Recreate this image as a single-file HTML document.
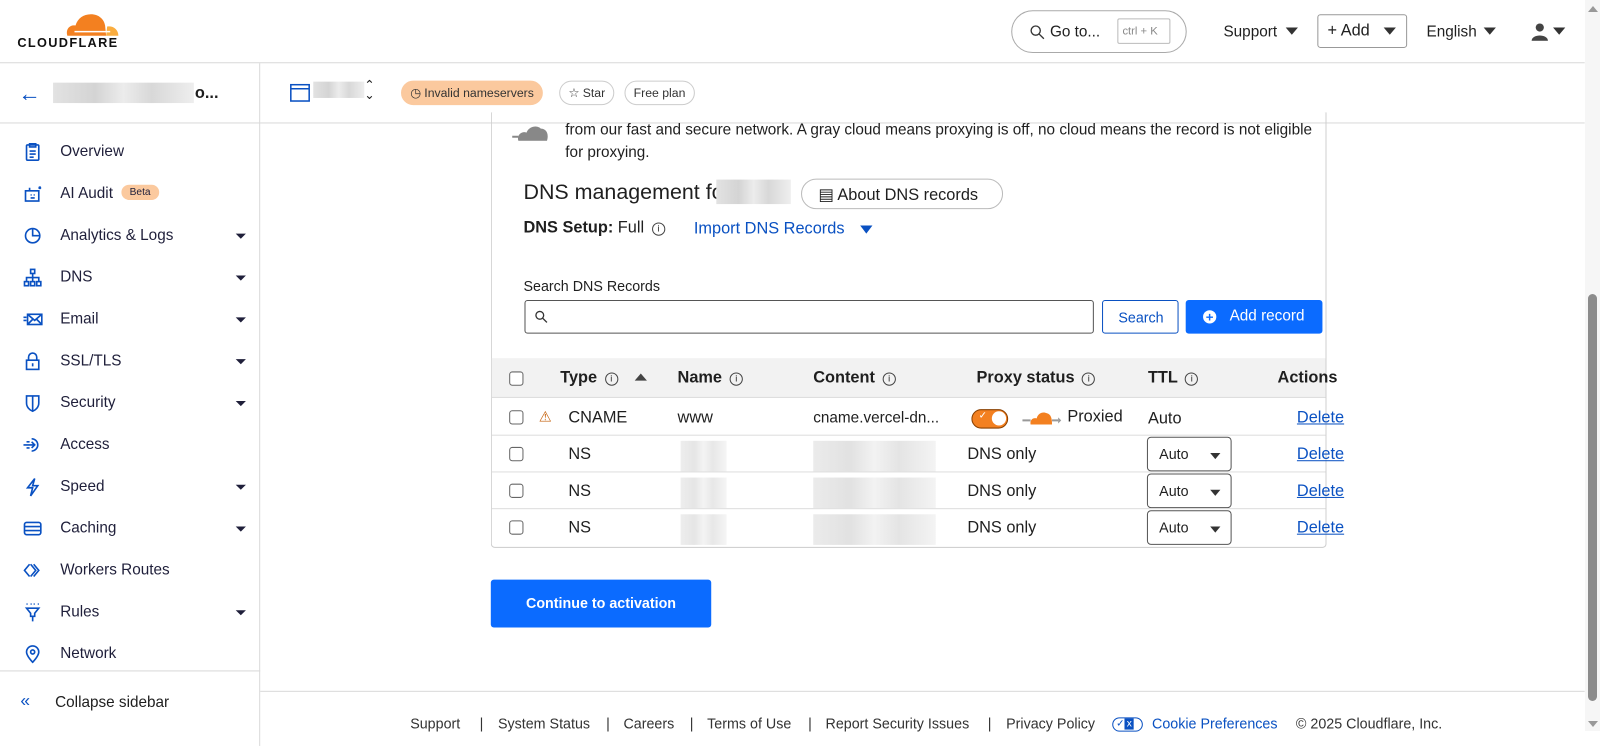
<!DOCTYPE html>
<html><head><meta charset="utf-8"><style>
*{box-sizing:border-box;margin:0;padding:0}
body{width:1600px;height:731px;overflow:hidden;font-family:"Liberation Sans",sans-serif;color:#1f1f1f;background:#fff;position:relative;font-size:15px}
.w{position:absolute;left:0;top:0;width:1568px;height:717px;transform:scale(1.0204);transform-origin:0 0}
.abs{position:absolute}
.hdr{left:0;top:0;width:1553px;height:62px;border-bottom:1px solid #d9d9d9}
.side{left:0;top:62px;width:255px;height:669px;border-right:1px solid #d9d9d9}
.sub{left:255px;top:62px;width:1298px;height:59px;border-bottom:1px solid #d9d9d9}
.nav{position:absolute;left:0;width:255px;height:41px;display:flex;align-items:center;font-size:15px;color:#1f1f3a}
.nav svg{position:absolute;left:22px;width:20px;height:20px;fill:none;stroke:#0a51c2;stroke-width:1.6}
.nav span{position:absolute;left:59px;top:12px}
.nav i{position:absolute;left:231px;top:19px;border:5px solid transparent;border-top:5px solid #1f1f3a;border-bottom:0}
.pill{position:absolute;top:79px;height:24px;border:1px solid #ccc;border-radius:12px;font-size:12px;display:flex;align-items:center;padding:0 8px;color:#333}
.blur{position:absolute;background:linear-gradient(90deg,#e2e2e2,#d4d4d4 30%,#ececec 50%,#d8d8d8 70%,#eee)}
.card{left:481px;top:110px;width:819px;height:427px;border:1px solid #cfcfcf;border-top:0;border-radius:0 0 4px 4px}
.th{font-weight:bold;font-size:16px;position:absolute;top:362px}
.row{position:absolute;left:482px;width:817px;height:36px;border-top:1px solid #ddd}
.cb{position:absolute;left:499px;width:14px;height:14px;border:1.5px solid #666;border-radius:3px}
.t{position:absolute;font-size:16px}
.del{position:absolute;left:1271px;color:#0a51c2;text-decoration:underline;font-size:16px}
.sel{position:absolute;left:1124px;width:83px;height:34px;border:1px solid #555;border-radius:4px;font-size:14px;padding:8px 0 0 11px}
.sel:after{content:"";position:absolute;right:10px;top:15px;border:5px solid transparent;border-top:6px solid #333;border-bottom:0}
.info{display:inline-block;width:13px;height:13px;border:1px solid #444;border-radius:50%;font-size:9px;text-align:center;line-height:11px;font-weight:normal;vertical-align:1px;margin-left:3px}
.foot span{position:absolute;top:701px;font-size:14px;color:#333;white-space:nowrap}
</style></head><body>
<div class="w">
<div class="abs hdr"></div>
<svg class="abs" style="left:60px;top:10px" width="62" height="26" viewBox="0 0 62 26"><path d="M6 25 C4 18 9 14 14 15 C16 8 22 4 29 4 C37 4 42 9 43 15 L44 25Z" fill="#f38020"/><path d="M44 25 L45 16 C51 15 56 19 56 25Z" fill="#faad3f"/><path d="M13 21 H48" stroke="#fff" stroke-width="1.5"/></svg>
<div class="abs" style="left:17px;top:35px;font-weight:bold;font-size:12.5px;letter-spacing:1.3px;color:#111">CLOUDFLARE</div>
<div class="abs" style="left:991px;top:10px;width:172px;height:42px;border:1px solid #aaa;border-radius:21px"></div>
<svg class="abs" style="left:1009px;top:24px" width="15" height="15" viewBox="0 0 15 15"><circle cx="6" cy="6" r="4.5" fill="none" stroke="#333" stroke-width="1.3"/><path d="M9.5 9.5L14 14" stroke="#333" stroke-width="1.3"/></svg>
<div class="abs" style="left:1029px;top:23px;font-size:15px">Go to...</div>
<div class="abs" style="left:1095px;top:18px;width:52px;height:25px;border:1px solid #bbb;border-radius:2px;font-size:11px;color:#888;padding:6px 0 0 4px">ctrl + K</div>
<div class="abs" style="left:1199px;top:23px;font-size:15px">Support</div>
<div class="abs" style="left:1260px;top:27px;border:6px solid transparent;border-top:7px solid #333;border-bottom:0"></div>
<div class="abs" style="left:1291px;top:14px;width:88px;height:33px;border:1px solid #999;border-radius:3px;font-size:16px;padding:7px 0 0 9px">+ Add</div>
<div class="abs" style="left:1356px;top:27px;border:6px solid transparent;border-top:7px solid #333;border-bottom:0"></div>
<div class="abs" style="left:1398px;top:23px;font-size:15px">English</div>
<div class="abs" style="left:1454px;top:27px;border:6px solid transparent;border-top:7px solid #333;border-bottom:0"></div>
<svg class="abs" style="left:1500px;top:22px" width="18" height="18" viewBox="0 0 18 18"><circle cx="9" cy="5" r="4" fill="#444"/><path d="M1 18 C1 11 17 11 17 18Z" fill="#444"/></svg>
<div class="abs" style="left:1522px;top:27px;border:6px solid transparent;border-top:7px solid #333;border-bottom:0"></div>

<div class="abs side"></div>
<div class="abs" style="left:0;top:120px;width:255px;border-top:1px solid #d9d9d9"></div>
<div class="abs" style="left:18px;top:79px;font-size:22px;color:#0a51c2">&#8592;</div>
<div class="blur" style="left:52px;top:81px;width:138px;height:20px"></div>
<div class="abs" style="left:191px;top:83px;font-weight:bold;font-size:16px">o...</div>

<div class="nav" style="top:128px"><svg viewBox="0 0 20 20"><rect x="4" y="3" width="12" height="15" rx="1"/><path d="M7 2h6v3H7zM7 9h6M7 12h6M7 15h4"/></svg><span>Overview</span></div>
<div class="nav" style="top:169px"><svg viewBox="0 0 20 20"><rect x="3" y="7" width="13" height="10"/><path d="M7 7V4M8 11h1M11 11h1M8 14h4M16 3l2 2M18 3l-2 2"/></svg><span>AI Audit</span><b style="position:absolute;left:119px;top:12px;background:#fbc99e;border-radius:9px;font-size:10px;font-weight:normal;padding:2px 8px">Beta</b></div>
<div class="nav" style="top:210px"><svg viewBox="0 0 20 20"><circle cx="10" cy="10" r="7"/><path d="M10 3v7h7"/></svg><span>Analytics &amp; Logs</span><i></i></div>
<div class="nav" style="top:251px"><svg viewBox="0 0 20 20"><rect x="8" y="2" width="4" height="4"/><rect x="2" y="14" width="4" height="4"/><rect x="8" y="14" width="4" height="4"/><rect x="14" y="14" width="4" height="4"/><path d="M10 6v8M4 14v-4h12v4"/></svg><span>DNS</span><i></i></div>
<div class="nav" style="top:292px"><svg viewBox="0 0 20 20"><rect x="5" y="5" width="14" height="10"/><path d="M5 5l7 6 7-6M5 15l5-5M19 15l-5-5M1 8h3M1 11h3"/></svg><span>Email</span><i></i></div>
<div class="nav" style="top:333px"><svg viewBox="0 0 20 20"><rect x="4" y="9" width="12" height="9"/><path d="M6 9V6a4 4 0 0 1 8 0v3M10 12v3"/></svg><span>SSL/TLS</span><i></i></div>
<div class="nav" style="top:374px"><svg viewBox="0 0 20 20"><path d="M4 3h12v7c0 4-3 7-6 8-3-1-6-4-6-8zM10 3v15"/></svg><span>Security</span><i></i></div>
<div class="nav" style="top:415px"><svg viewBox="0 0 20 20"><path d="M9 4a6 6 0 1 1 0 12M1 10h11M9 7l3 3-3 3M4 7h3M4 13h3"/></svg><span>Access</span></div>
<div class="nav" style="top:456px"><svg viewBox="0 0 20 20"><path d="M12 2L5 11h5l-2 8 7-10h-5z"/></svg><span>Speed</span><i></i></div>
<div class="nav" style="top:497px"><svg viewBox="0 0 20 20"><rect x="2" y="4" width="16" height="12" rx="2"/><path d="M2 8h16M2 12h16"/></svg><span>Caching</span><i></i></div>
<div class="nav" style="top:538px"><svg viewBox="0 0 20 20"><path d="M7 4L2 10l5 6M11 4l5 6-5 6M8 4l5 6-5 6"/></svg><span>Workers Routes</span></div>
<div class="nav" style="top:579px"><svg viewBox="0 0 20 20"><path d="M4 6h12l-4 5v3h-4v-3zM10 14v5M4 2h1M8 2h1M11 2h1M15 2h1"/></svg><span>Rules</span><i></i></div>
<div class="nav" style="top:620px"><svg viewBox="0 0 20 20"><path d="M10 18s-6-6-6-10a6 6 0 0 1 12 0c0 4-6 10-6 10z"/><circle cx="10" cy="8" r="2"/></svg><span>Network</span></div>
<div class="abs" style="left:0;top:657px;width:255px;border-top:1px solid #d9d9d9"></div>
<div class="abs" style="left:20px;top:677px;font-size:17px;color:#0a51c2">&#171;</div>
<div class="abs" style="left:54px;top:680px;font-size:15px">Collapse sidebar</div>

<div class="abs sub"></div>
<svg class="abs" style="left:284px;top:82px" width="20" height="18" viewBox="0 0 20 18"><rect x="1" y="1" width="18" height="16" fill="none" stroke="#0a51c2" stroke-width="1.5"/><path d="M1 5h18" stroke="#0a51c2" stroke-width="1.5"/></svg>
<div class="blur" style="left:307px;top:80px;width:50px;height:16px"></div>
<div class="abs" style="left:357px;top:78px;font-size:12px;line-height:10px">&#8963;<br>&#8964;</div>
<div class="pill" style="left:393px;background:#fbc99e;border-color:#fbc99e">&#9719;&nbsp;Invalid nameservers</div>
<div class="pill" style="left:548px">&#9734;&nbsp;Star</div>
<div class="pill" style="left:612px">Free plan</div>

<div class="abs card"></div>
<svg class="abs" style="left:500px;top:120px" width="40" height="18" viewBox="0 0 40 18"><path d="M8 18 C6 12 12 8 16 10 C18 4 26 2 30 6 C36 6 38 12 36 18Z" fill="#888"/><path d="M2 14h6" stroke="#888" stroke-width="2"/></svg>
<div class="abs" style="left:554px;top:117px;font-size:15px;line-height:22px;width:740px">from our fast and secure network. A gray cloud means proxying is off, no cloud means the record is not eligible for proxying.</div>
<div class="abs" style="left:513px;top:177px;font-size:21px">DNS management fo</div>
<div class="blur" style="left:702px;top:176px;width:73px;height:24px"></div>
<div class="abs" style="left:785px;top:175px;width:198px;height:30px;border:1px solid #bbb;border-radius:15px;font-size:16px;padding:5px 0 0 16px">&#9636; About DNS records</div>
<div class="abs" style="left:513px;top:215px;font-size:16px"><b>DNS Setup:</b> Full <span class="info">i</span></div>
<div class="abs" style="left:680px;top:216px;font-size:16px;color:#0a51c2">Import DNS Records</div>
<div class="abs" style="left:843px;top:221px;border:6px solid transparent;border-top:8px solid #0a51c2;border-bottom:0"></div>
<div class="abs" style="left:513px;top:272px;font-size:14px">Search DNS Records</div>
<div class="abs" style="left:514px;top:294px;width:558px;height:33px;border:1px solid #555;border-radius:3px"></div>
<svg class="abs" style="left:524px;top:304px" width="13" height="13" viewBox="0 0 13 13"><circle cx="5" cy="5" r="3.8" fill="none" stroke="#333" stroke-width="1.3"/><path d="M8 8l4 4" stroke="#333" stroke-width="1.3"/></svg>
<div class="abs" style="left:1080px;top:294px;width:75px;height:33px;border:1px solid #0a51c2;border-radius:3px;color:#0a51c2;font-size:14px;padding:8px 0 0 15px">Search</div>
<div class="abs" style="left:1162px;top:294px;width:134px;height:33px;background:#0b6bff;border-radius:3px;color:#fff;font-size:15px;padding:7px 0 0 43px">Add record</div>
<div class="abs" style="left:1179px;top:304px;width:13px;height:13px;background:#fff;border-radius:50%;color:#0b6bff;font-size:13px;line-height:13px;text-align:center;font-weight:bold">+</div>

<div class="abs" style="left:482px;top:351px;width:817px;height:39px;background:#f2f2f2;border-bottom:1px solid #ddd"></div>
<div class="cb" style="top:364px;background:#fff"></div>
<div class="th" style="left:549px">Type <span class="info">i</span></div>
<div class="abs" style="left:622px;top:366px;border:6px solid transparent;border-bottom:7px solid #444;border-top:0"></div>
<div class="th" style="left:664px">Name <span class="info">i</span></div>
<div class="th" style="left:797px">Content <span class="info">i</span></div>
<div class="th" style="left:957px">Proxy status <span class="info">i</span></div>
<div class="th" style="left:1125px">TTL <span class="info">i</span></div>
<div class="th" style="left:1252px">Actions</div>

<div class="row" style="top:390px;border-top:0"></div>
<div class="cb" style="top:402px"></div>
<div class="abs" style="left:528px;top:400px;color:#c25a00;font-size:14px">&#9888;</div>
<div class="t" style="left:557px;top:401px">CNAME</div>
<div class="t" style="left:664px;top:401px">www</div>
<div class="t" style="left:797px;top:401px;font-size:15px">cname.vercel-dn...</div>
<div class="abs" style="left:952px;top:401px;width:36px;height:19px;background:#f38020;border:1.5px solid #8a4000;border-radius:10px"><div style="position:absolute;right:1px;top:1px;width:14px;height:14px;background:#fff;border-radius:50%"></div><span style="position:absolute;left:6px;top:0;color:#fff;font-size:10px">&#10003;</span></div>
<svg class="abs" style="left:1000px;top:401px" width="42" height="16" viewBox="0 0 42 16"><path d="M10 15 C9 10 13 8 16 9 C17 4 22 2 26 4 C30 5 31 9 31 15Z" fill="#f38020"/><path d="M2 11h8M31 11h6" stroke="#999" stroke-width="2"/><path d="M37 8l3 3-3 3z" fill="#999"/></svg>
<div class="t" style="left:1046px;top:400px">Proxied</div>
<div class="t" style="left:1125px;top:402px">Auto</div>
<div class="del" style="top:401px">Delete</div>

<div class="row" style="top:426px"></div>
<div class="cb" style="top:438px"></div>
<div class="t" style="left:557px;top:437px">NS</div>
<div class="blur" style="left:667px;top:432px;width:45px;height:30px;opacity:.6"></div>
<div class="blur" style="left:797px;top:432px;width:120px;height:30px;opacity:.7"></div>
<div class="t" style="left:948px;top:437px">DNS only</div>
<div class="sel" style="top:428px">Auto</div>
<div class="del" style="top:437px">Delete</div>

<div class="row" style="top:462px"></div>
<div class="cb" style="top:474px"></div>
<div class="t" style="left:557px;top:473px">NS</div>
<div class="blur" style="left:667px;top:468px;width:45px;height:30px;opacity:.6"></div>
<div class="blur" style="left:797px;top:468px;width:120px;height:30px;opacity:.7"></div>
<div class="t" style="left:948px;top:473px">DNS only</div>
<div class="sel" style="top:464px">Auto</div>
<div class="del" style="top:473px">Delete</div>

<div class="row" style="top:498px"></div>
<div class="cb" style="top:510px"></div>
<div class="t" style="left:557px;top:509px">NS</div>
<div class="blur" style="left:667px;top:504px;width:45px;height:30px;opacity:.6"></div>
<div class="blur" style="left:797px;top:504px;width:120px;height:30px;opacity:.7"></div>
<div class="t" style="left:948px;top:509px">DNS only</div>
<div class="sel" style="top:500px">Auto</div>
<div class="del" style="top:509px">Delete</div>

<div class="abs" style="left:481px;top:568px;width:216px;height:47px;background:#0b6bff;border-radius:3px;color:#fff;font-weight:bold;font-size:14px;text-align:center;line-height:47px">Continue to activation</div>

<div class="abs" style="left:255px;top:677px;width:1298px;border-top:1px solid #d9d9d9"></div>
<div class="foot">
<span style="left:402px">Support</span><span style="left:470px">|</span>
<span style="left:488px">System Status</span><span style="left:594px">|</span>
<span style="left:611px">Careers</span><span style="left:676px">|</span>
<span style="left:693px">Terms of Use</span><span style="left:792px">|</span>
<span style="left:809px">Report Security Issues</span><span style="left:968px">|</span>
<span style="left:986px">Privacy Policy</span>
<span style="left:1090px;top:703px;width:30px;height:14px;border:1.5px solid #0a51c2;border-radius:7px;font-size:10px;line-height:11px;color:#0a51c2">&nbsp;&#10003;<b style="background:#0a51c2;color:#fff;padding:0 2px;font-weight:normal">x</b></span>
<span style="left:1129px;color:#0a51c2">Cookie Preferences</span>
<span style="left:1270px">© 2025 Cloudflare, Inc.</span>
</div>
</div>
<div class="abs" style="left:1585px;top:0;width:15px;height:731px;background:#f6f6f6"></div>
<div class="abs" style="left:1588px;top:294px;width:9px;height:407px;background:#8c8c8c;border-radius:5px"></div>
<div class="abs" style="left:1588px;top:6px;border:5px solid transparent;border-bottom:6px solid #999;border-top:0"></div>
<div class="abs" style="left:1588px;top:721px;border:5px solid transparent;border-top:6px solid #999;border-bottom:0"></div>
</body></html>
